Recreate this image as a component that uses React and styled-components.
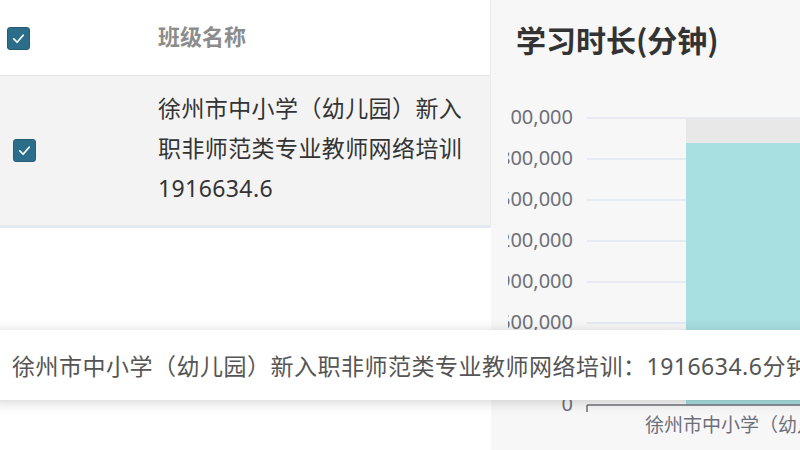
import React from "react";
import styled, { createGlobalStyle } from "styled-components";

const GlobalStyle = createGlobalStyle`
  html, body {
    margin: 0;
    padding: 0;
    background: #fff;
  }
  body {
    font-family: "Noto Sans", "Noto Sans CJK SC", sans-serif;
  }
`;

const Page = styled.div`
  position: relative;
  width: 800px;
  height: 450px;
  overflow: hidden;
  display: flex;
  background: #fff;
`;

const TablePanel = styled.div`
  width: 490px;
  flex-shrink: 0;
  align-self: flex-start;
  border-right: 1px solid #ebebeb;
`;

const Row = styled.div`
  display: grid;
  grid-template-columns: 158px 1fr;
  align-items: center;
  height: ${(p) => (p.$head ? "75px" : "149px")};
  background: ${(p) => (p.$head ? "#fff" : "#f3f3f3")};
  border-bottom: ${(p) => (p.$head ? "1px solid #e3e3e3" : "3px solid #e4e9f1")};
`;

const CheckCell = styled.div`
  padding-left: ${(p) => p.$inset}px;
  display: flex;
  align-items: center;
  padding-top: ${(p) => (p.$head ? 1 : 0)}px;
`;

const Box = styled.span`
  width: 23px;
  height: 23px;
  border-radius: 3px;
  background: #2c6e8a;
  border: 1px solid #245d75;
  box-sizing: border-box;
  display: flex;
  align-items: center;
  justify-content: center;
`;

const HeadText = styled.div`
  font-family: "Noto Sans CJK SC", sans-serif;
  font-weight: 700;
  font-size: 22px;
  color: #8c8c8c;
  margin-top: -5px;
`;

const NameCell = styled.div`
  width: 320px;
  font-family: "Noto Sans", "Noto Sans CJK SC", sans-serif;
  font-size: 23px;
  letter-spacing: 0.4px;
  line-height: 40px;
  color: #333;
  margin-top: -5px;
`;

const ChartPanel = styled.div`
  flex: 1;
  background: #f7f7f7;
  display: flex;
  flex-direction: column;
  padding-top: 18px;
`;

const Title = styled.div`
  font-family: "Noto Sans CJK SC", sans-serif;
  font-weight: 700;
  font-size: 30px;
  line-height: 42px;
  color: #333;
  padding-left: 25px;
  height: 62px;
`;

const ChartArea = styled.div`
  margin-left: 17px;
  overflow: hidden;
`;

const Tooltip = styled.div`
  position: absolute;
  left: -10px;
  top: 330px;
  height: 70px;
  width: 900px;
  display: flex;
  align-items: center;
  padding-left: 22px;
  box-sizing: border-box;
  background: #fff;
  box-shadow: 0 2px 12px rgba(0, 0, 0, 0.18);
  font-family: "Noto Sans", "Noto Sans CJK SC", sans-serif;
  font-size: 23px;
  letter-spacing: 0.5px;
  color: #555;
  white-space: nowrap;
`;

const Check = () => (
  <svg width="15" height="15" viewBox="0 0 16 16">
    <polyline points="3,8.5 6.5,12 13,4.5" fill="none" stroke="#fff" strokeWidth="1.8" strokeLinecap="round" strokeLinejoin="round" />
  </svg>
);

const ticks = [0, 300000, 600000, 900000, 1200000, 1500000, 1800000, 2100000];
const value = 1916634.6;
const max = 2100000;
const y0 = 325;
const plotH = 287;
const yOf = (v) => y0 - (v / max) * plotH;

const Chart = () => (
  <svg width="292" height="370" style={{ display: "block" }}>
    {ticks.map((t) => (
      <g key={t}>
        {t > 0 && <line x1="79" x2="292" y1={yOf(t)} y2={yOf(t)} stroke="#e0e6f1" strokeWidth="1.5" />}
        <text x="65" y={yOf(t) + 1} textAnchor="end" dominantBaseline="middle" fontSize="20" fill="#6e7079" fontFamily="Noto Sans, sans-serif">
          {t.toLocaleString("en-US")}
        </text>
      </g>
    ))}
    <rect x="178" y={yOf(max)} width="120" height={y0 - yOf(max)} fill="#e8e8e8" />
    <rect x="178" y={yOf(value)} width="120" height={y0 - yOf(value)} fill="#a8dfe0" />
    <line x1="79" x2="292" y1={y0} y2={y0} stroke="#6e7079" strokeWidth="1.5" />
    <line x1="79" x2="79" y1={y0} y2={y0 + 7} stroke="#6e7079" strokeWidth="1.5" />
    <text x="137" y={y0 + 22} dominantBaseline="middle" fontSize="19" fill="#6e7079" fontFamily="Noto Sans CJK SC, sans-serif">
      徐州市中小学（幼儿园）新入职非师范类专业教师网络培训
    </text>
  </svg>
);

export default function App() {
  return (
    <>
      <GlobalStyle />
      <Page>
        <TablePanel>
          <Row $head>
            <CheckCell $inset={7} $head>
              <Box>
                <Check />
              </Box>
            </CheckCell>
            <HeadText>班级名称</HeadText>
          </Row>
          <Row>
            <CheckCell $inset={13}>
              <Box>
                <Check />
              </Box>
            </CheckCell>
            <NameCell>
              <div>徐州市中小学（幼儿园）新入职非师范类专业教师网络培训</div>
              <div>1916634.6</div>
            </NameCell>
          </Row>
        </TablePanel>
        <ChartPanel>
          <Title>学习时长(分钟)</Title>
          <ChartArea>
            <Chart />
          </ChartArea>
        </ChartPanel>
        <Tooltip>徐州市中小学（幼儿园）新入职非师范类专业教师网络培训：1916634.6分钟</Tooltip>
      </Page>
    </>
  );
}
